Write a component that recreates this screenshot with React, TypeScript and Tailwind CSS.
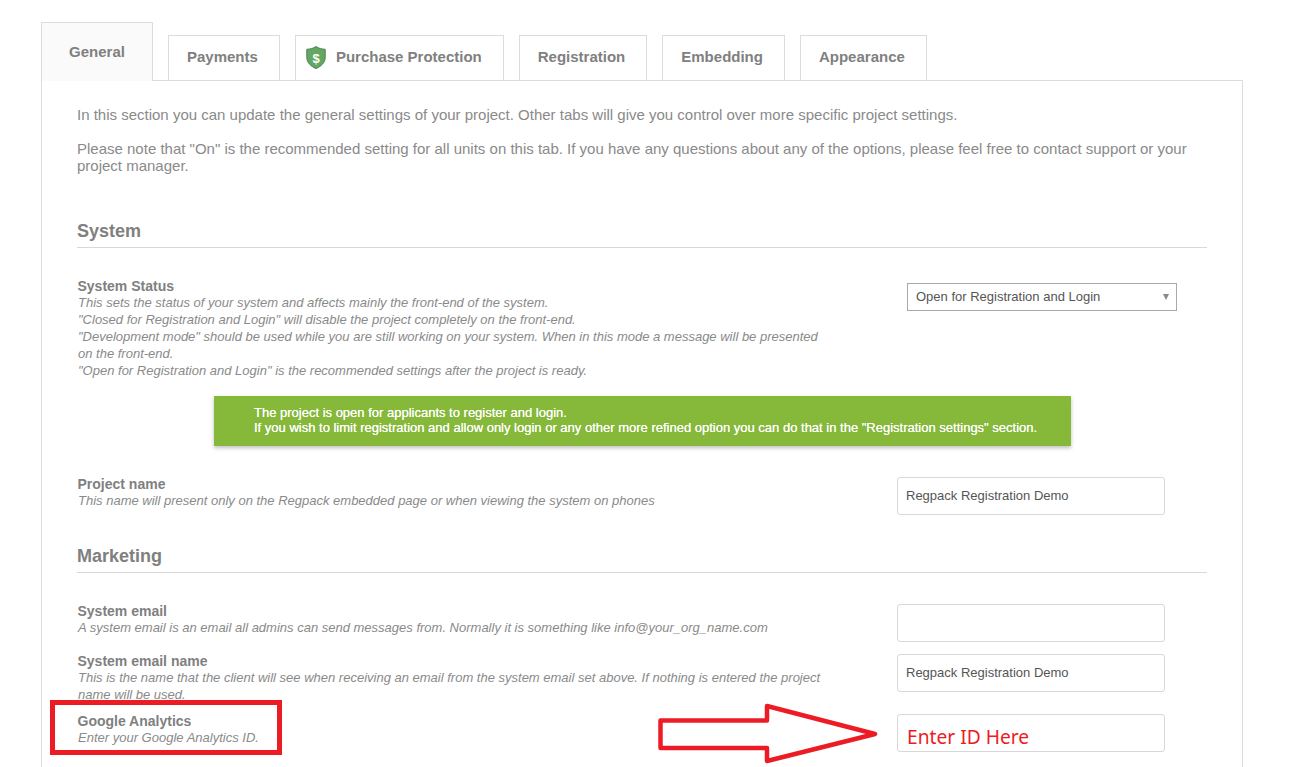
import React from 'react';

const tabs = ['Payments', 'Purchase Protection', 'Registration', 'Embedding', 'Appearance'];

const Shield = () => (
  <svg width="20" height="23" viewBox="0 0 20 23" className="mr-[10px]">
    <path d="M10 0.5 C7.5 2.4 4 3.2 0.8 3.3 V11.5 C0.8 16.5 5 20.5 10 22.5 C15 20.5 19.2 16.5 19.2 11.5 V3.3 C16 3.2 12.5 2.4 10 0.5 Z" fill="#62a862" stroke="#4d7f50" strokeWidth="1" />
    <text x="10" y="16.5" textAnchor="middle" fontSize="13" fontWeight="700" fill="#ffffff" fontFamily="'Liberation Sans', sans-serif">$</text>
  </svg>
);

const Tab = ({ label }: { label: string }) => (
  <div className={`flex h-[45px] items-center justify-center border border-b-0 border-[#dcdcdc] bg-white pb-[2px] text-[15px] font-bold text-[#808080] ${label === 'Purchase Protection' ? 'pr-[21px] pl-[10px]' : 'pr-[21px] pl-[18px]'}`}>
    {label === 'Purchase Protection' && <Shield />}
    {label}
  </div>
);

const Field = ({ value }: { value?: string }) => (
  <div className="ml-auto mr-[42px] flex h-[38px] w-[268px] shrink-0 items-center rounded-[3px] border border-[#d8d8d8] bg-white pl-[8px] text-[13px] text-[#555555]">
    {value}
  </div>
);

const Heading = ({ children }: { children: React.ReactNode }) => (
  <h2 className="border-b border-[#d8d8d8] pb-[5px] text-[18px] leading-[21px] font-bold text-[#808080]">{children}</h2>
);

const Label = ({ title, lines }: { title: string; lines: string[] }) => (
  <div className="-mt-px w-[760px] shrink-0 pl-px text-[13px] leading-[17px] text-[#8a8a8a]">
    <div className="-ml-[0.5px] text-[14px] leading-[16px] font-bold text-[#808080]">{title}</div>
    {lines.map((l) => (
      <div key={l} className="italic whitespace-nowrap">{l}</div>
    ))}
  </div>
);

export default function App() {
  return (
    <div className="relative h-[767px] w-[1293px] overflow-hidden bg-white pl-[41px] font-['Liberation_Sans',Arial,sans-serif]">
      <div className="flex items-end gap-[15px] pt-[22px]">
        <div className="relative z-10 -mb-px flex h-[59px] w-[112px] items-start justify-center border border-b-0 border-[#dcdcdc] bg-[#fafafa] pt-[20px] text-[15px] leading-[17px] font-bold text-[#808080]">
          General
        </div>
        {tabs.map((t) => (
          <Tab key={t} label={t} />
        ))}
      </div>

      <div className="h-[700px] w-[1202px] border border-[#dcdcdc] px-[35px] pt-[25px]">
        <p className="text-[15px] leading-[17px] text-[#8a8a8a]">
          In this section you can update the general settings of your project. Other tabs will give you control over more specific project settings.
        </p>
        <p className="mt-[17px] text-[15px] leading-[17px] text-[#8a8a8a]">
          Please note that "On" is the recommended setting for all units on this tab. If you have any questions about any of the options, please feel free to contact support or your project manager.
        </p>

        <div className="mt-[47px]">
          <Heading>System</Heading>
        </div>

        <div className="mt-[31px] flex items-start">
          <Label
            title="System Status"
            lines={[
              'This sets the status of your system and affects mainly the front-end of the system.',
              '"Closed for Registration and Login" will disable the project completely on the front-end.',
              '"Development mode" should be used while you are still working on your system. When in this mode a message will be presented',
              'on the front-end.',
              '"Open for Registration and Login" is the recommended settings after the project is ready.',
            ]}
          />
          <div className="mt-[4px] ml-[70px] flex h-[28px] w-[270px] shrink-0 items-center justify-between border border-[#a9a9a9] pr-[7px] pl-[8px] text-[13px] text-[#555555]">
            Open for Registration and Login
            <span className="h-0 w-0 border-x-[3.5px] border-t-[6px] border-x-transparent border-t-[#8a8a8a]" />
          </div>
        </div>

        <div className="mt-[17px] ml-[137px] h-[50px] w-[857px] bg-[#86b83a] pt-[9px] pl-[40px] text-[13px] leading-[15px] text-white shadow-[0_2px_4px_rgba(0,0,0,0.25)] [text-shadow:0_0_0.6px_#ffffff]">
          <div>The project is open for applicants to register and login.</div>
          <div>If you wish to limit registration and allow only login or any other more refined option you can do that in the "Registration settings" section.</div>
        </div>

        <div className="mt-[31px] flex items-start">
          <Label title="Project name" lines={['This name will present only on the Regpack embedded page or when viewing the system on phones']} />
          <Field value="Regpack Registration Demo" />
        </div>

        <div className="mt-[31px]">
          <Heading>Marketing</Heading>
        </div>

        <div className="mt-[31px] flex h-[50px] items-start">
          <Label title="System email" lines={['A system email is an email all admins can send messages from. Normally it is something like info@your_org_name.com']} />
          <Field />
        </div>
        <div className="flex h-[60px] items-start">
          <Label
            title="System email name"
            lines={['This is the name that the client will see when receiving an email from the system email set above. If nothing is entered the project', 'name will be used.']}
          />
          <Field value="Regpack Registration Demo" />
        </div>
        <div className="flex h-[49px] items-start">
          <Label title="Google Analytics" lines={['Enter your Google Analytics ID.']} />
          <Field />
        </div>
        <p className="pl-px text-[13px] leading-[17px] text-[#8a8a8a]">In order to find your ID please do the following:</p>
      </div>

      {/* red annotations pasted on top of the screenshot */}
      <div className="absolute top-[700px] left-[50px] h-[55px] w-[232px] border-[5px] border-[#ed1c24]" />
      <svg className="absolute top-[700px] left-[655px]" width="230" height="66" viewBox="0 0 230 66">
        <path d="M5.5 20.5 H112 V6 L220 34 L112 61 V48 H5.5 Z" fill="none" stroke="#ed1c24" strokeWidth="4.5" strokeLinejoin="round" />
      </svg>
      <div className="absolute top-[724px] left-[907px] font-['Noto_Sans',sans-serif] text-[19.2px] leading-[26px] text-[#ed1c24]">Enter ID Here</div>
    </div>
  );
}
